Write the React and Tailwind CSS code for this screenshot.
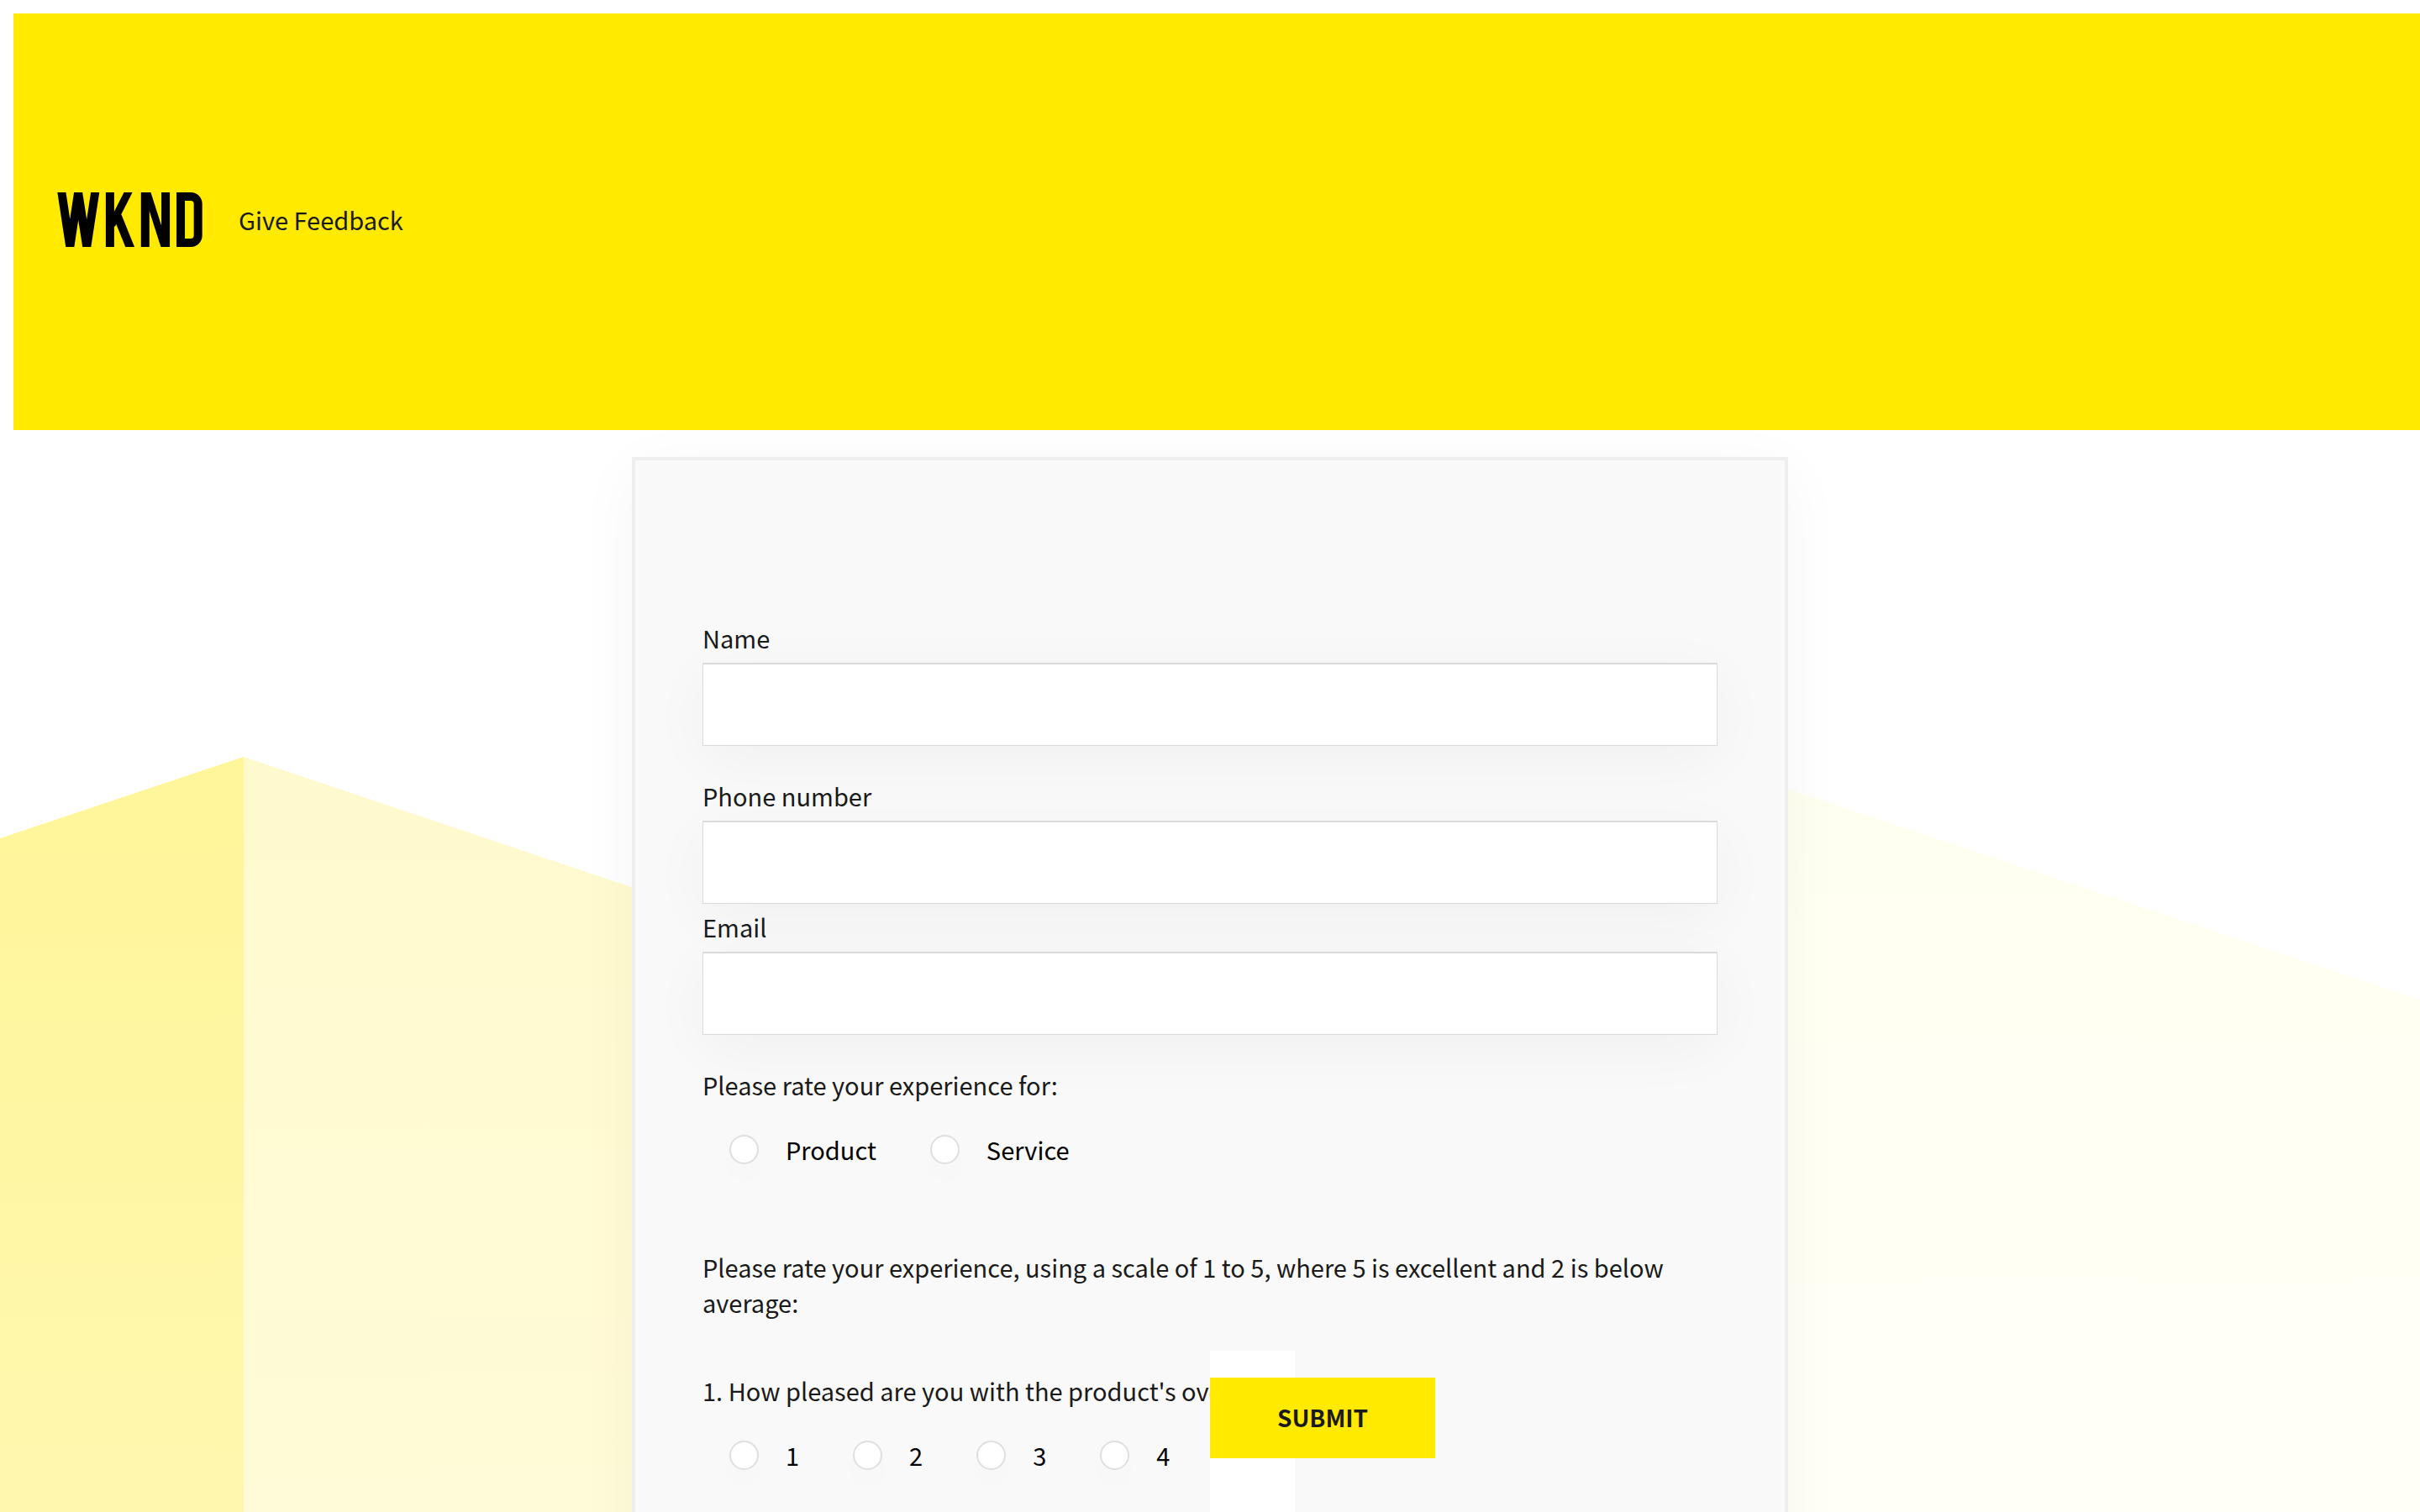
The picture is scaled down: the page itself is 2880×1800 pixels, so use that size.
import React from "react";

const SHADOW = "shadow-[0_16px_72px_rgba(0,0,0,0.04)]";

function Logo() {
  return (
    <svg
      role="img"
      aria-label="WKND"
      viewBox="204 144 520 195"
      className="h-[65px] w-[173px] overflow-hidden"
      fill="none"
      stroke="#000"
      strokeMiterlimit="20"
    >
      <path d="M213.5 100 L250 339 L279.5 144 L310 339 L346.5 100" strokeWidth="30" />
      <path d="M393 100 V380" strokeWidth="30" />
      <path d="M480.5 100 L399 260" strokeWidth="27" />
      <path d="M420 229 L481 380" strokeWidth="30" />
      <path d="M519 100 V380 M592 100 V380" strokeWidth="30" />
      <path d="M524 138 L590 345" strokeWidth="25" />
      <path d="M646 159 H682 A26 26 0 0 1 708 185 V298 A26 26 0 0 1 682 324 H646 Z" strokeWidth="30" />
    </svg>
  );
}

function Mountains() {
  return (
    <svg
      aria-hidden="true"
      viewBox="0 0 2880 900"
      preserveAspectRatio="none"
      className="absolute inset-x-0 bottom-0 h-1/2 w-full"
    >
      <defs>
        <linearGradient id="ridge" x1="0" y1="0" x2="0" y2="1">
          <stop offset="0" stopColor="#fff599" />
          <stop offset="1" stopColor="#fff7ae" />
        </linearGradient>
        <linearGradient id="slope" x1="0" y1="0" x2="0" y2="1">
          <stop offset="0" stopColor="#fffacd" />
          <stop offset="1" stopColor="#fffbd8" />
        </linearGradient>
        <linearGradient id="far" x1="0" y1="0" x2="0" y2="1">
          <stop offset="0" stopColor="#fffff0" />
          <stop offset="1" stopColor="#fffff7" />
        </linearGradient>
      </defs>
      <path d="M290 1 L2980 905 H290 Z" fill="url(#slope)" />
      <path d="M0 98 L290 1 V900 H0 Z" fill="url(#ridge)" />
      <path d="M1900 -37 L2880 290 V900 H1900 Z" fill="url(#far)" />
    </svg>
  );
}

function Field({ id, label, type }) {
  return (
    <div className="flex flex-col gap-[9px]">
      <label htmlFor={id}>{label}</label>
      <input
        id={id}
        name={id}
        type={type}
        className={`h-[99px] w-full border border-t-2 border-[#dadada] bg-white px-6 outline-none ${SHADOW}`}
      />
    </div>
  );
}

function Choices({ legend, name, options }) {
  return (
    <fieldset>
      <legend className="mb-[35px]">{legend}</legend>
      <div className="flex gap-16 pl-8 text-black">
        {options.map((o) => (
          <label key={o} className="flex items-center gap-8">
            <input
              type="radio"
              name={name}
              value={o}
              className={`size-[35px] shrink-0 appearance-none rounded-full border-2 border-[#dfdfdf] bg-white checked:bg-[#ffea00] ${SHADOW}`}
            />
            {o}
          </label>
        ))}
      </div>
    </fieldset>
  );
}

export default function App() {
  return (
    <div className="relative h-screen overflow-hidden bg-white font-['Noto_Sans_CJK_SC','Noto_Sans',sans-serif] text-[29px] leading-[42px] text-[#1a1a1a]">
      <Mountains />
      <div className="relative pt-4">
        <header className="ml-4 flex h-[496px] items-center gap-[43px] bg-[#ffea00] pb-1.5 pl-[52px]">
          <Logo />
          <a href="#feedback">Give Feedback</a>
        </header>
        <main
          id="feedback"
          className={`mx-auto mt-8 w-[1376px] max-w-full border-4 border-[#eeeeee] bg-[#f9f9f9] px-20 pt-[190px] pb-40 ${SHADOW}`}
        >
          <form onSubmit={(e) => e.preventDefault()}>
            <Field id="name" label="Name" type="text" />
            <div className="mt-[38px] flex flex-col gap-[6px]">
              <Field id="phone" label="Phone number" type="tel" />
              <Field id="email" label="Email" type="email" />
            </div>
            <div className="mt-[38px]">
              <Choices
                legend="Please rate your experience for:"
                name="subject"
                options={["Product", "Service"]}
              />
            </div>
            <p className="mt-[98px]">
              Please rate your experience, using a scale of 1 to 5, where 5 is excellent and 2 is below average:
            </p>
            <div className="mt-[63px]">
              <Choices
                legend="1. How pleased are you with the product's overall quality?"
                name="quality"
                options={["1", "2", "3", "4", "5"]}
              />
            </div>
            <div className="fixed bottom-0 left-1/2 h-48 w-[101px] bg-white pt-8">
              <button
                type="submit"
                className="h-24 w-[268px] bg-[#ffea00] pb-0.5 text-[28px] font-bold uppercase"
              >
                Submit
              </button>
            </div>
          </form>
        </main>
      </div>
    </div>
  );
}
